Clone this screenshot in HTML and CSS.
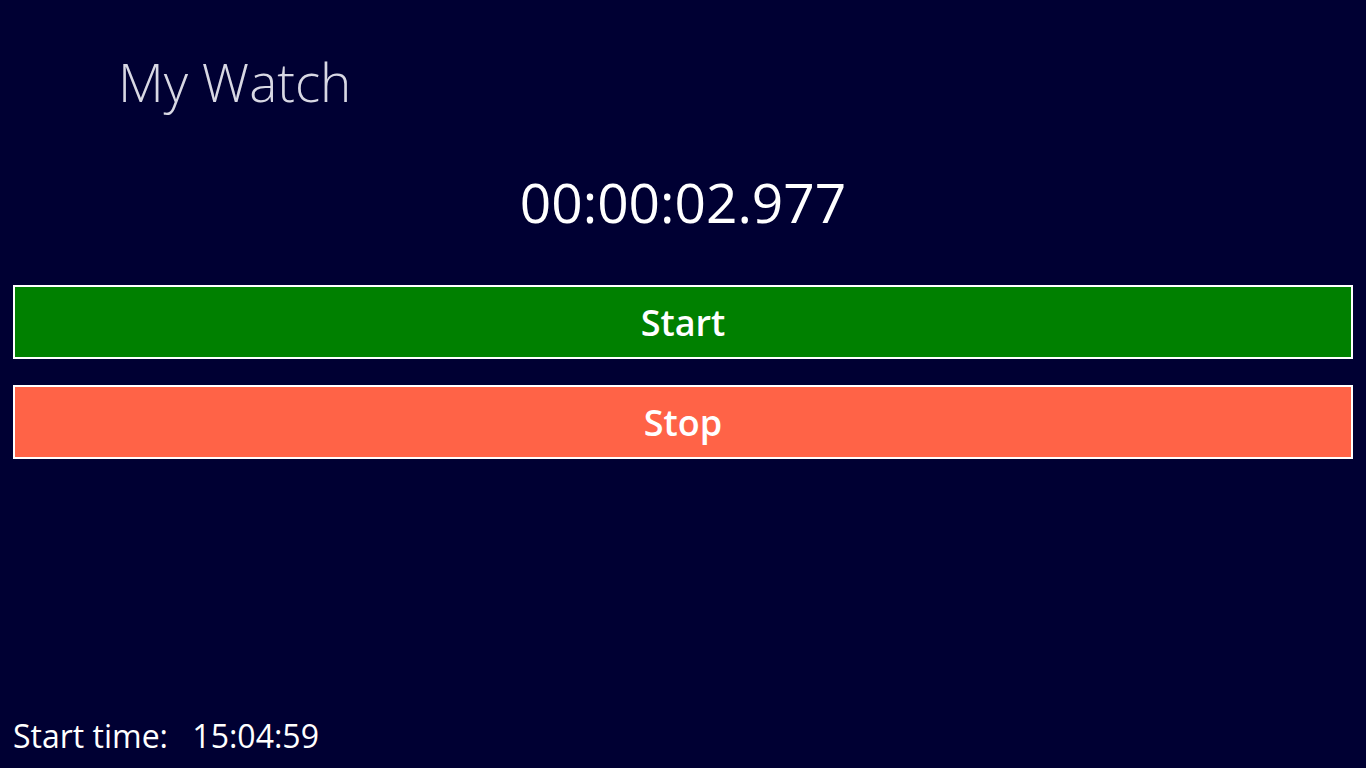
FILE: index.html
```html
<!DOCTYPE html>
<html lang="en">
<head>
    <meta charset="UTF-8">
    <title>My Watch</title>
    <link rel="stylesheet" href="styles.css">
</head>
<body>
    <div class="page">
        <!-- Page header -->
        <header class="page-header">
            <h1>My Watch</h1>
        </header>

        <!-- Elapsed time readout -->
        <div class="elapsed" id="elapsed">00:00:02.977</div>

        <!-- Controls -->
        <div class="controls">
            <button class="btn btn-start" id="start">Start</button>
            <button class="btn btn-stop" id="stop">Stop</button>
        </div>

        <!-- Footer with start time -->
        <div class="start-time">
            <span class="label">Start time:</span>
            <span class="value" id="startTime">15:04:59</span>
        </div>
    </div>
</body>
</html>
```

FILE: styles.css
```css
/* Whole page: dark navy app surface */
body {
    margin: 0;
    padding: 0;
    background: #000033;
    color: #ffffff;
    font-family: 'Open Sans', 'Noto Sans', sans-serif;
}

.page {
    display: flex;
    flex-direction: column;
    height: 768px;
    box-sizing: border-box;
}

.page-header {
    padding: 44px 0 0 118px;
    height: 108px;
    box-sizing: border-box;
}

.page-header h1 {
    margin: 0;
    font-size: 53px;
    font-weight: 300;
    line-height: 76px;
    color: #d8d8e4;
}

.elapsed {
    text-align: center;
    font-size: 55px;
    font-weight: 400;
    line-height: 80px;
    margin-top: 54px;
}

.controls {
    display: flex;
    flex-direction: column;
    gap: 26px;
    padding: 0 13px;
    margin-top: 43px;
}

.btn {
    height: 74px;
    border: 2px solid #ffffff;
    color: #ffffff;
    font-family: 'Open Sans', 'Noto Sans', sans-serif;
    font-size: 36px;
    font-weight: 600;
    cursor: pointer;
}

.btn-start {
    background-color: #008000;
}

.btn-stop {
    background-color: #ff6347;
}

.start-time {
    margin-top: auto;
    padding: 0 0 12px 13px;
    font-size: 32px;
    line-height: 40px;
}

.start-time .label {
    margin-right: 16px;
}
```
